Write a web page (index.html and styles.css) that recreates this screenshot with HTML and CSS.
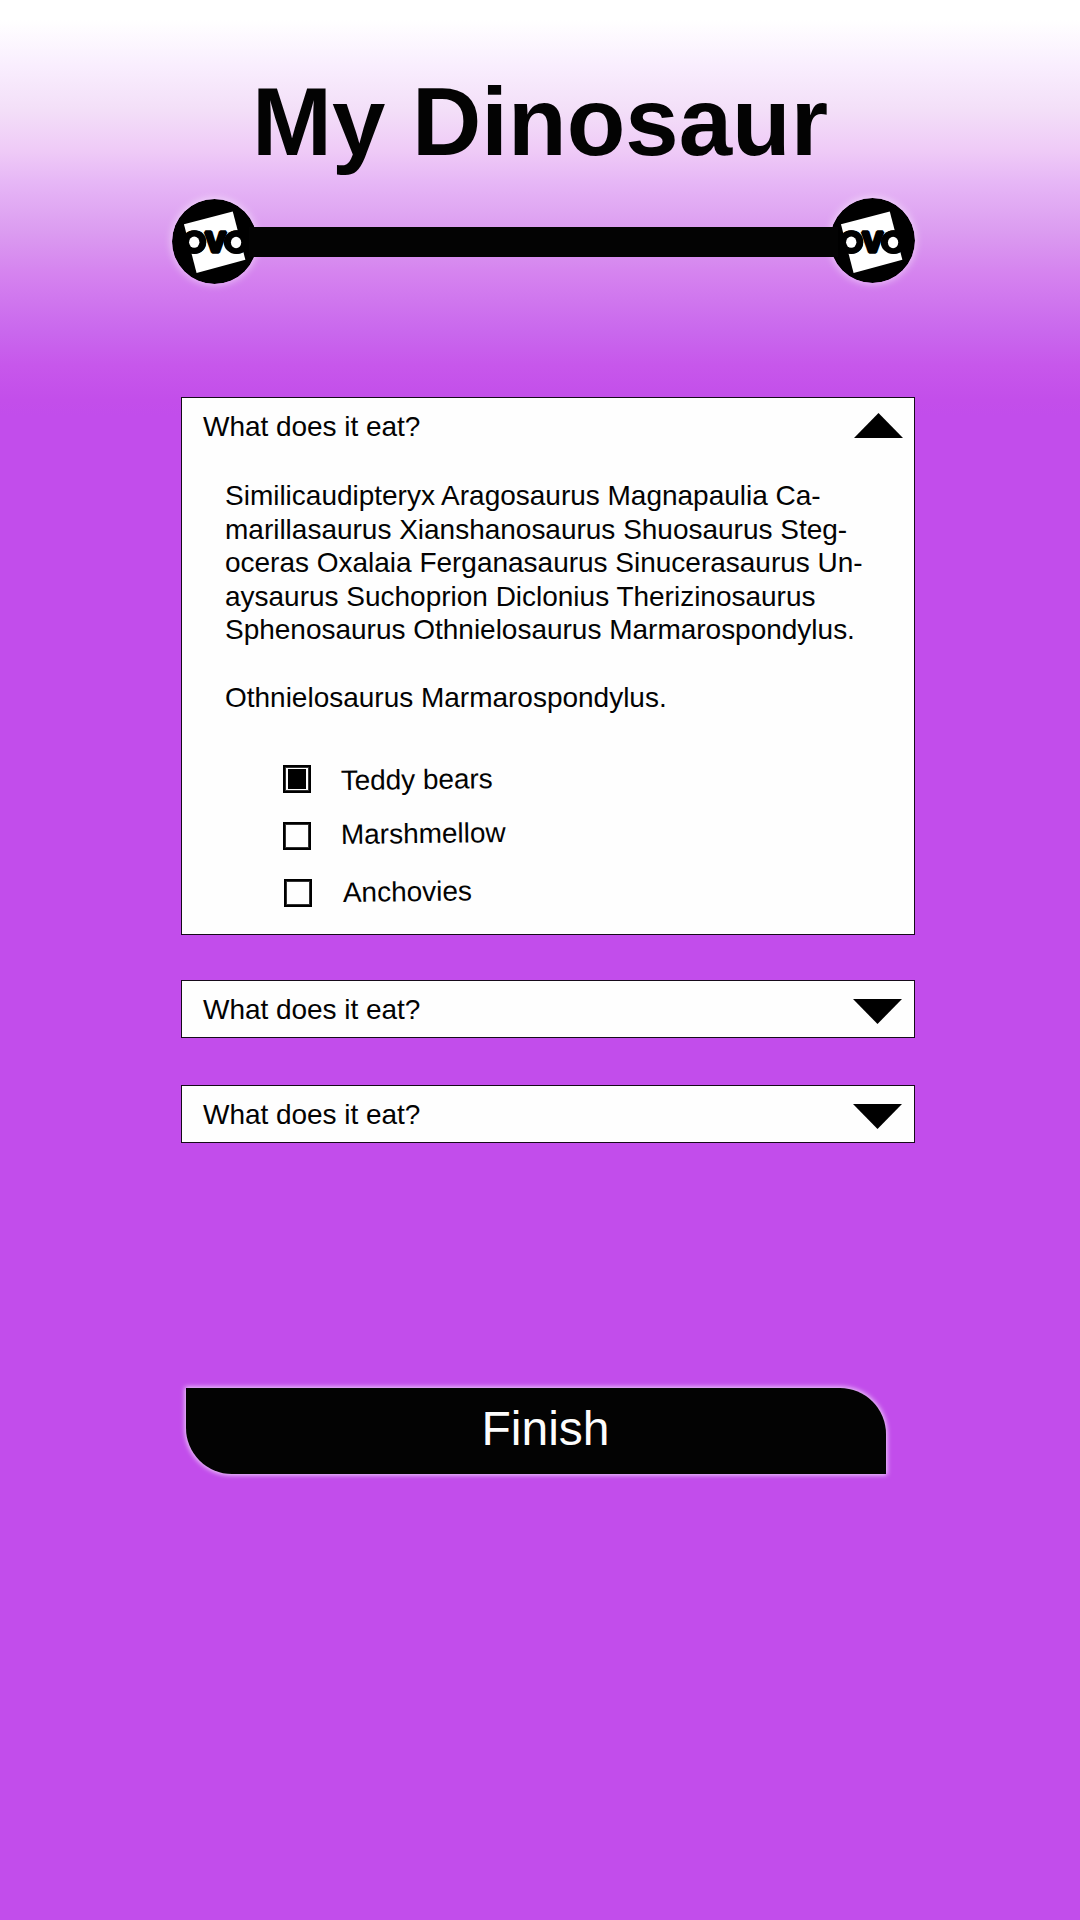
FILE: index.html
```html
<!DOCTYPE html>
<html lang="en">
<head>
<meta charset="utf-8">
<title>My Dinosaur</title>
<link rel="stylesheet" href="styles.css">
</head>
<body>
<main class="page">
  <h1 class="title">My Dinosaur</h1>
  <div class="progress">
    <svg class="stop" viewBox="0 0 256 256">
      <circle cx="128" cy="128" r="128"/>
      <path d="M36 76L183 38L221 183L74 223Z" fill="#fff"/>
      <text class="logo-text" x="131" y="161">ovo</text>
      <ellipse cx="67" cy="130" rx="36" ry="36"/>
      <ellipse cx="194" cy="130" rx="38" ry="36"/>
      <ellipse cx="67" cy="130" rx="15.5" ry="17" fill="#fff"/>
      <ellipse cx="193" cy="131" rx="15.5" ry="17" fill="#fff"/>
    </svg>
    <div class="track"></div>
    <svg class="stop stop-end" viewBox="0 0 256 256">
      <circle cx="128" cy="128" r="128"/>
      <path d="M33 79L180 41L218 186L71 226Z" fill="#fff"/>
      <text class="logo-text" x="128" y="164">ovo</text>
      <ellipse cx="64" cy="133" rx="36" ry="36"/>
      <ellipse cx="191" cy="133" rx="38" ry="36"/>
      <ellipse cx="64" cy="133" rx="15.5" ry="17" fill="#fff"/>
      <ellipse cx="190" cy="134" rx="15.5" ry="17" fill="#fff"/>
    </svg>
  </div>
  <section class="card card-open">
    <header class="card-head">
      <h2>What does it eat?</h2>
      <svg class="arrow arrow-up" viewBox="0 0 49 25"><path d="M24.5 0L49 25H0Z"/></svg>
    </header>
    <div class="copy">
      <p>Similicaudipteryx Aragosaurus Magnapaulia Ca-<br>marillasaurus Xianshanosaurus Shuosaurus Steg-<br>oceras Oxalaia Ferganasaurus Sinucerasaurus Un-<br>aysaurus Suchoprion Diclonius Therizinosaurus<br>Sphenosaurus Othnielosaurus Marmarospondylus.</p>
      <p>Othnielosaurus Marmarospondylus.</p>
    </div>
    <ul class="options">
      <li><span class="box checked"></span><span class="label teddy">Teddy bears</span></li>
      <li><span class="box"></span><span class="label marsh">Marshmellow</span></li>
      <li class="shifted"><span class="box"></span><span class="label anch">Anchovies</span></li>
    </ul>
  </section>
  <section class="card">
    <header class="card-head">
      <h2>What does it eat?</h2>
      <svg class="arrow" viewBox="0 0 49 25"><path d="M0 0H49L24.5 25Z"/></svg>
    </header>
  </section>
  <section class="card">
    <header class="card-head">
      <h2>What does it eat?</h2>
      <svg class="arrow" viewBox="0 0 49 25"><path d="M0 0H49L24.5 25Z"/></svg>
    </header>
  </section>
  <button class="finish">Finish</button>
</main>
</body>
</html>
```
FILE: styles.css
```css
* { box-sizing: border-box; margin: 0; padding: 0; }
body {
  height: 1920px;
  color: #030303;
  font-family: "Liberation Sans", Arial, sans-serif;
  background: linear-gradient(#fff 20px, #f9eefe 66px, #f3dff8 110px, #efcbf7 150px, #e6b6f6 183px, #db9bf0 233px, #d582ef 275px, #c967ed 333px, #c757eb 366px, #c34eea 400px, #c24deb 415px);
}
.page { display: flex; flex-direction: column; padding: 66px 0 0 181px; }
.title {
  align-self: flex-start;
  margin-left: 71px;
  font-size: 96px;
  line-height: 111px;
  white-space: nowrap;
}
.progress { display: flex; align-items: center; margin: 22px 0 0 -9px; height: 85px; }
.stop { width: 85px; height: 85px; flex: none; border-radius: 50%; box-shadow: 0 0 9px rgba(255,255,255,.65); }
.track { width: 589px; height: 30px; margin: 0 -8px; background: #030303; position: relative; z-index: 1; }
.stop-end { margin-top: -2px; }
.logo-text { font-size: 112px; font-weight: 700; letter-spacing: -1px; text-anchor: middle; fill: #000; stroke: #000; stroke-width: 10px; stroke-linejoin: bevel; }
.card { width: 734px; height: 58px; margin-bottom: 47px; background: #fefefe; border: 1px solid #160a1a; }
.card-open { height: 538px; margin: 113px 0 45px; }
.card-head { display: flex; justify-content: space-between; align-items: flex-start; height: 56px; padding: 18px 12px 0 21px; }
.card-head h2 { font-size: 28px; font-weight: 400; line-height: 32px; margin-top: -5px; letter-spacing: -.03px; }
.arrow { width: 49px; height: 25px; fill: #000; }
.arrow-up { margin: -3px -1px 0 0; }
.copy { padding: 25px 0 0 43px; font-size: 28px; line-height: 33.6px; white-space: nowrap; letter-spacing: -.01px; }
.copy p + p { margin-top: 33.6px; }
.options { list-style: none; margin: 51px 0 0 101px; display: grid; gap: 29px; }
.options li { display: flex; align-items: center; height: 28px; }
.options .shifted { margin-left: 1px; }
.box { width: 28px; height: 28px; border: 2px solid #000; box-shadow: inset 0 0 0 1px #333; display: grid; place-items: center; }
.checked::after { content: ""; width: 18px; height: 20px; background: #000; }
.label { margin-left: 30px; font-size: 28px; line-height: 32px; transform: rotate(-.7deg); transform-origin: 0 100%; }
.teddy { margin-top: 3px; letter-spacing: -.08px; }
.marsh { margin-top: -3px; }
.anch { margin-top: 0; margin-left: 31px; }
.finish {
  width: 700px;
  height: 86px;
  margin: 198px 0 0 5px;
  padding: 0 0 6px 19px;
  border: 0;
  border-radius: 0 46px 0 46px;
  background: #030303;
  color: #fdfdfd;
  font: 48px "Liberation Sans", Arial, sans-serif;
  box-shadow: 0 0 5px 1px rgba(255,255,255,.75);
}
```
